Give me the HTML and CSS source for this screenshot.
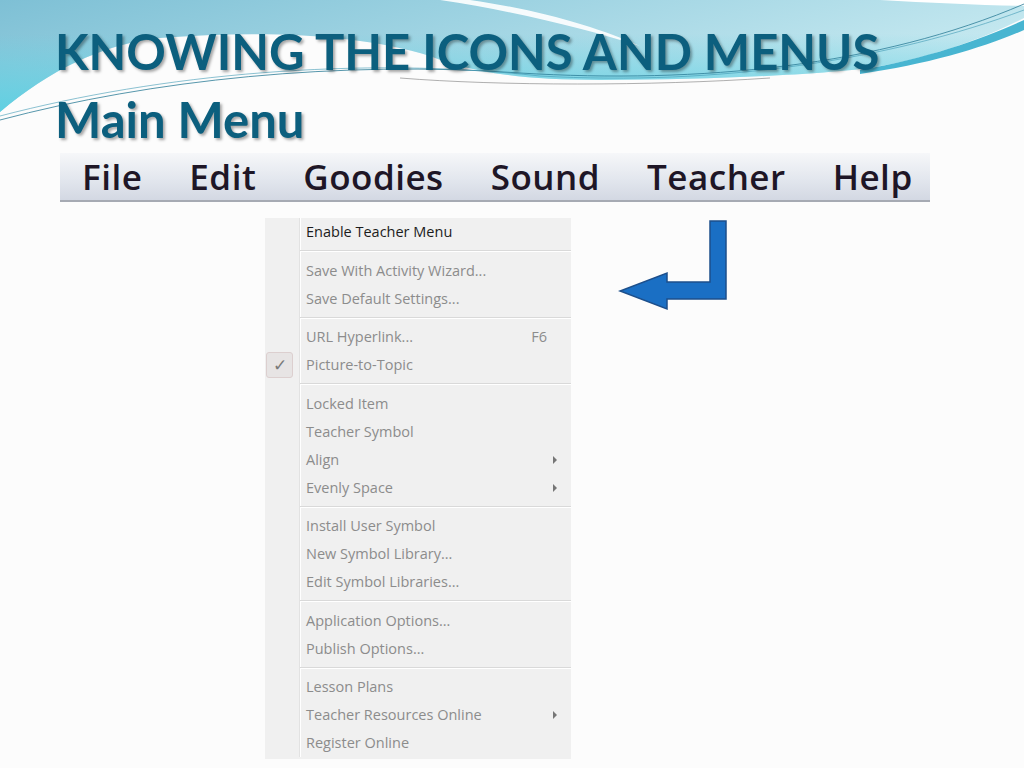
FILE: index.html
```html
<!DOCTYPE html>
<html lang="en">
<head>
    <meta charset="UTF-8">
    <title>Knowing the Icons and Menus</title>
    <link rel="stylesheet" href="styles.css">
</head>
<body>
    <div class="slide">
        <svg class="swoosh" width="1024" height="130" viewBox="0 0 1024 130">
            <defs>
                <linearGradient id="band" x1="0" y1="0" x2="1" y2="0.4">
                    <stop offset="0" stop-color="#7ec0d5"/>
                    <stop offset="0.45" stop-color="#9ed3e2"/>
                    <stop offset="1" stop-color="#c8eaf1"/>
                </linearGradient>
                <linearGradient id="cyan" x1="0" y1="0" x2="0" y2="1">
                    <stop offset="0.3" stop-color="#5fd0e2" stop-opacity="0"/>
                    <stop offset="1" stop-color="#5fd0e2" stop-opacity="1"/>
                </linearGradient>
            </defs>
            <path d="M0,0 H1024 V18 C990,35 940,56 870,68 C820,74 720,80 600,80 C520,80 470,72 430,56 C360,34 260,30 160,38 C100,45 50,70 0,112 Z" fill="url(#band)"/>
            <path d="M0,0 H1024 V18 C990,35 940,56 870,68 C820,74 720,80 600,80 C520,80 470,72 430,56 C360,34 260,30 160,38 C100,45 50,70 0,112 Z" fill="url(#cyan)"/>
            <path d="M440,0 H470 C540,10 600,28 640,46 C590,30 520,12 440,0 Z" fill="#ffffff" opacity="0.9"/>
            <path d="M880,0 H1024 V6 C980,5 930,3 880,0 Z" fill="#ffffff"/>
            <path d="M860,70 C930,58 985,38 1024,20 V30 C985,47 930,64 860,74 Z" fill="#48b5d1"/>
            <path d="M0,120 C150,80 340,60 520,73 C700,84 880,66 1024,4" fill="none" stroke="#2c7c97" stroke-width="0.8"/>
            <path d="M0,116 C160,74 360,56 540,76 C720,86 890,60 1024,10" fill="none" stroke="#3e98b3" stroke-width="0.6"/>
            <path d="M400,78 C500,86 650,86 770,78" fill="none" stroke="#7a7a7a" stroke-width="0.6"/>
        </svg>

        <header class="title">
            <h1>KNOWING THE ICONS AND MENUS<br>Main Menu</h1>
        </header>

        <nav class="menubar">
            <span>File</span>
            <span>Edit</span>
            <span>Goodies</span>
            <span>Sound</span>
            <span>Teacher</span>
            <span>Help</span>
        </nav>

        <div class="stage">
            <ul class="dropdown">
                <li class="item enabled">Enable Teacher Menu</li>
                <li class="sep"></li>
                <li class="item">Save With Activity Wizard...</li>
                <li class="item">Save Default Settings...</li>
                <li class="sep"></li>
                <li class="item">URL Hyperlink... <span class="key">F6</span></li>
                <li class="item checked"><span class="check">&#10003;</span>Picture-to-Topic</li>
                <li class="sep"></li>
                <li class="item">Locked Item</li>
                <li class="item">Teacher Symbol</li>
                <li class="item sub">Align</li>
                <li class="item sub">Evenly Space</li>
                <li class="sep"></li>
                <li class="item">Install User Symbol</li>
                <li class="item">New Symbol Library...</li>
                <li class="item">Edit Symbol Libraries...</li>
                <li class="sep"></li>
                <li class="item">Application Options...</li>
                <li class="item">Publish Options...</li>
                <li class="sep"></li>
                <li class="item">Lesson Plans</li>
                <li class="item sub">Teacher Resources Online</li>
                <li class="item">Register Online</li>
            </ul>

            <svg class="arrow" width="110" height="92" viewBox="0 0 110 92">
                <path d="M92,2 H108 V80 H49 V90 L2,72 L49,54 V63 H92 Z" fill="#1a6fc4" stroke="#1d4f8b" stroke-width="1.5" stroke-linejoin="miter"/>
            </svg>
        </div>
    </div>
</body>
</html>
```

FILE: styles.css
```css
body {
    margin: 0;
    padding: 0;
    background: #fcfcfc;
    font-family: 'Open Sans', sans-serif;
}
.slide {
    position: relative;
    width: 1024px;
    height: 768px;
    overflow: hidden;
}
.swoosh {
    position: absolute;
    top: 0;
    left: 0;
}
.title {
    position: relative;
    padding: 17px 0 0 55px;
}
.title h1 {
    margin: 0;
    font-family: 'Lato', sans-serif;
    font-weight: 700;
    font-size: 49px;
    line-height: 68px;
    color: #0c5f7e;
    text-shadow: 2px 2px 3px rgba(0, 0, 0, 0.35);
}
.menubar {
    position: relative;
    margin: 0 0 0 60px;
    width: 848px;
    height: 47px;
    padding-left: 22px;
    display: flex;
    gap: 47px;
    background: linear-gradient(#f6f7f9, #e3e7ee 55%, #d3d8e3);
    border-bottom: 2px solid #a6aab3;
    font-size: 35px;
    font-weight: 600;
    letter-spacing: 0.5px;
    line-height: 47px;
    color: #1e1626;
}
.stage {
    display: flex;
    align-items: flex-start;
    gap: 47px;
    margin: 16px 0 0 265px;
}
.dropdown {
    list-style: none;
    margin: 0;
    padding: 0 0 2px;
    width: 306px;
    background: #f0f0f0;
    font-size: 14.5px;
    color: #8c8c8c;
}
.item {
    position: relative;
    height: 28px;
    line-height: 28px;
    padding-left: 41px;
    background: linear-gradient(90deg, transparent 34px, #e2e2e2 34px, #e2e2e2 35px, #ffffff 35px, #ffffff 36px, transparent 36px);
}
.item.enabled {
    color: #1c1c1c;
}
.key {
    position: absolute;
    right: 24px;
    top: 0;
}
.sub::after {
    content: "";
    position: absolute;
    right: 14px;
    top: 10px;
    border-left: 4px solid #767676;
    border-top: 4px solid transparent;
    border-bottom: 4px solid transparent;
}
.check {
    position: absolute;
    left: 1px;
    top: 1px;
    width: 25px;
    height: 24px;
    line-height: 24px;
    text-align: center;
    border: 1px solid #dccfcf;
    border-radius: 3px;
    background: #e7e4e4;
    color: #7a7a7a;
    font-size: 17px;
}
.sep {
    height: 10.5px;
    background:
        linear-gradient(#d9d9d9, #d9d9d9) 35px 4px / 100% 1px no-repeat,
        linear-gradient(#ffffff, #ffffff) 35px 5px / 100% 1px no-repeat,
        linear-gradient(90deg, transparent 34px, #e2e2e2 34px, #e2e2e2 35px, #ffffff 35px, #ffffff 36px, transparent 36px);
}
.arrow {
    margin-top: 1px;
}
```
